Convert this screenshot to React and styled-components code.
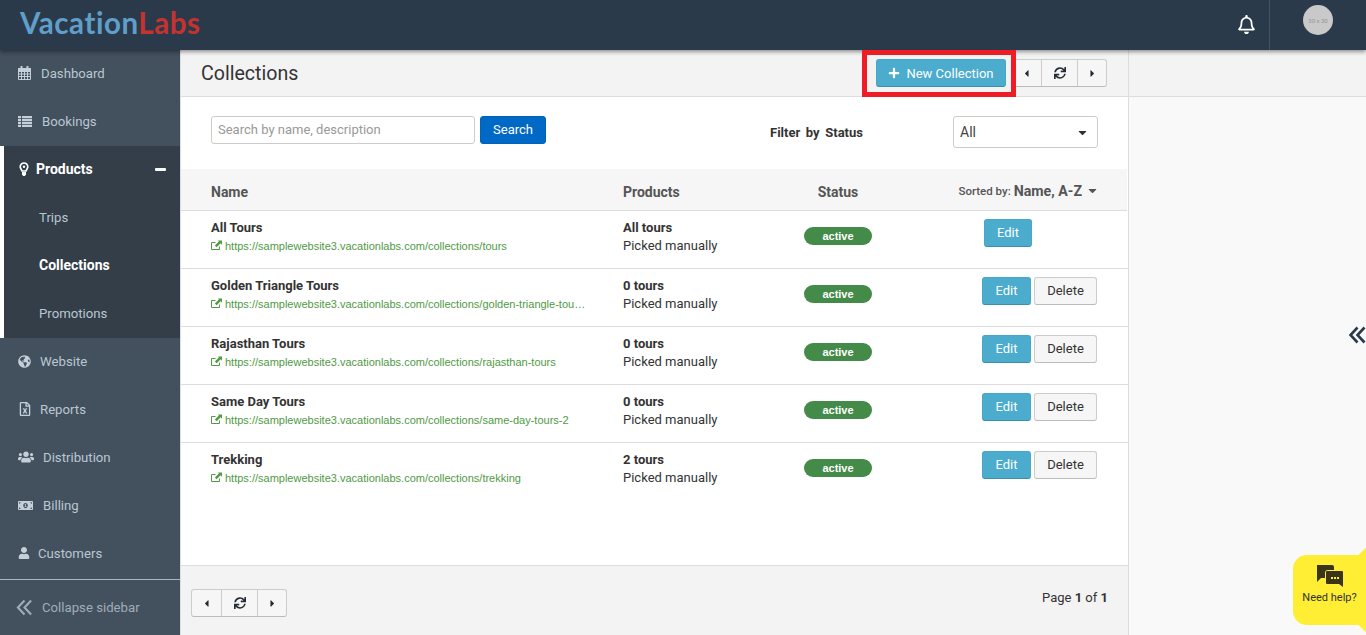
import React from "react";
import styled, { createGlobalStyle } from "styled-components";

// icons

import {
  FaCaretDown,
  FaCaretLeft,
  FaCaretRight,
  FaGlobeAmericas,
  FaMoneyBillAlt,
  FaPlus,
  FaRegBell,
  FaRegFileExcel,
  FaSync,
  FaUser,
  FaUsers,
} from "react-icons/fa";

const GlobalStyle = createGlobalStyle`
  html, body {
    margin: 0;
    height: 100%;
    overflow: hidden;
    font-family: Roboto, "Liberation Sans", Arial, sans-serif;
    color: #333;
    background: #fff;
  }
  * { box-sizing: border-box; }
`;

const Page = styled.div`
  position: relative;
  width: 1366px;
  height: 635px;
  display: flex;
  flex-direction: column;
  overflow: hidden;
`;

const TopBar = styled.header`
  position: relative;
  z-index: 2;
  height: 50px;
  flex: none;
  background: #2b3a4a;
  box-shadow: 0 2px 4px rgba(0, 0, 0, 0.4);
  display: flex;
  align-items: center;
`;

const Logo = styled.div`
  margin-left: 20px;
  padding-bottom: 5px;
  font-family: Lato, "Open Sans", sans-serif;
  font-size: 29.5px;
  font-weight: 700;
  letter-spacing: 0.55px;
  color: #5f9fc9;

  span {
    color: #c5322f;
  }
`;

const BellBox = styled.div`
  margin-left: auto;
  width: 46px;
  height: 50px;
  color: #fff;
  font-size: 19px;
  display: flex;
  align-items: center;
  justify-content: center;
  padding: 0 0 2px 1px;
`;

const UserBox = styled.div`
  width: 97px;
  height: 50px;
  border-left: 1px solid #46535f;
  padding: 5px 0 0 33px;
`;

const Avatar = styled.div`
  width: 30px;
  height: 30px;
  border-radius: 50%;
  background: #c9c9c9;
  color: #969696;
  font-size: 6px;
  display: flex;
  align-items: center;
  justify-content: center;
`;

const Body = styled.div`
  flex: 1;
  display: flex;
  min-height: 0;
`;

const Sidebar = styled.nav`
  width: 180px;
  flex: none;
  background: #43515e;
  display: flex;
  flex-direction: column;
`;

const NavItem = styled.div`
  height: 48px;
  flex: none;
  display: flex;
  align-items: center;
  padding: 0 0 2px 18px;
  font-size: 13.2px;
  color: #b9c7d1;
`;

const NavIcon = styled.span`
  width: ${(props) => props.$width}px;
  flex: none;
  display: flex;
  align-items: center;
  font-size: ${(props) => props.$size || 14}px;
  color: #c3d0da;
`;

const ActiveGroup = styled.div`
  background: #333e48;
  border-left: 4px solid #fff;
`;

const ActiveHead = styled.div`
  height: 48px;
  display: flex;
  align-items: center;
  padding: 0 14px 2px 15px;
  font-size: 14px;
  font-weight: 700;
  color: #fff;
`;

const ActiveIcon = styled.span`
  width: 17px;
  display: flex;
  align-items: center;
`;

const Minus = styled.span`
  margin-left: auto;
  width: 11px;
  height: 3px;
  border-radius: 1px;
  background: #fff;
`;

const SubItem = styled.div`
  height: 48px;
  display: flex;
  align-items: center;
  padding: 0 0 2px 35px;
  font-size: ${(props) => (props.$active ? 14 : 13.2)}px;
  font-weight: ${(props) => (props.$active ? 700 : 400)};
  color: ${(props) => (props.$active ? "#fff" : "#b9c7d1")};
`;

const Collapse = styled.div`
  margin-top: auto;
  height: 56px;
  border-top: 1px solid #a9b4bd;
  display: flex;
  align-items: center;
  gap: 9px;
  padding: 0 0 0 16px;
  font-size: 13.2px;
  color: #9fadb8;
`;

const Main = styled.main`
  width: 949px;
  flex: none;
  background: #fff;
  border-left: 1px solid #ddd;
  border-right: 1px solid #ddd;
  display: flex;
  flex-direction: column;
`;

const TitleBar = styled.div`
  height: 47px;
  flex: none;
  background: #f3f3f3;
  border-bottom: 1px solid #ddd;
  display: flex;
  align-items: center;
  padding: 0 21px 0 20px;
`;

const Title = styled.h1`
  margin: 0;
  font-size: 19.6px;
  font-weight: 400;
  color: #333;
`;

const NewButton = styled.button`
  margin-left: auto;
  margin-right: 5px;
  width: 130px;
  height: 28px;
  border: 1px solid #46a8c9;
  border-bottom-color: #3b8fac;
  border-radius: 3px;
  background: #4bacce;
  color: #fff;
  font-family: inherit;
  font-size: 13px;
  display: flex;
  align-items: center;
  justify-content: center;
  gap: 6px;
  padding: 0;

  svg {
    font-size: 12px;
  }
`;

const Pager = styled.div`
  height: 28px;
  display: flex;
  background: #f6f6f6;
  border: 1px solid #ccc;
  border-bottom-color: #bbb;
  border-radius: 3px;
  color: #222c36;
`;

const PagerCell = styled.div`
  width: ${(props) => props.$width}px;
  display: flex;
  align-items: center;
  justify-content: center;
  font-size: ${(props) => props.$size}px;

  & + & {
    border-left: 1px solid #ccc;
  }
`;

const FilterRow = styled.div`
  height: 72px;
  flex: none;
  display: flex;
  align-items: flex-start;
  padding: 19px 30px 0 30px;
`;

const SearchInput = styled.div`
  width: 264px;
  height: 28px;
  border: 1px solid #ccc;
  border-radius: 3px;
  padding: 0 0 2px 6px;
  display: flex;
  align-items: center;
  font-size: 13px;
  color: #999;
`;

const SearchButton = styled.button`
  margin-left: 5px;
  width: 66px;
  height: 28px;
  border: 1px solid #0063ba;
  border-radius: 3px;
  background: #0069c6;
  color: #fff;
  font-family: inherit;
  font-size: 13px;
  padding: 0 0 2px;
`;

const FilterLabel = styled.div`
  margin-left: 224px;
  height: 32px;
  display: flex;
  align-items: center;
  font-size: 13px;
  font-weight: 700;
  color: #333;
  word-spacing: 2.4px;
`;

const SelectBox = styled.div`
  margin-left: auto;
  width: 145px;
  height: 32px;
  border: 1px solid #ccc;
  border-radius: 3px;
  padding: 0 8px 0 6px;
  display: flex;
  align-items: center;
  justify-content: space-between;
  font-size: 14px;
  color: #444;

  svg {
    font-size: 13px;
    color: #333;
  }
`;

const TableHead = styled.div`
  height: 42px;
  flex: none;
  background: #f6f6f6;
  border-bottom: 1px solid #ddd;
  margin-right: 1px;
  display: grid;
  grid-template-columns: 412px 181px 1fr;
  align-items: center;
  padding: 4px 28px 0 30px;
  font-size: 14px;
  font-weight: 700;
  color: #555;
`;

const StatusHead = styled.div`
  width: 68px;
  white-space: nowrap;
  display: flex;
  justify-content: center;
`;

const HeadEnd = styled.div`
  display: flex;
  justify-content: space-between;
  align-items: center;
`;

const SortedBy = styled.div`
  display: flex;
  align-items: center;
  font-size: 11.5px;
  font-weight: 500;
  gap: 3px;
  margin-top: -2px;

  b {
    font-size: 14.2px;
  }

  svg {
    font-size: 13px;
    margin-left: 1px;
  }
`;

const Row = styled.div`
  height: 58px;
  flex: none;
  border-bottom: 1px solid ${(props) => (props.$last ? "transparent" : "#ddd")};
  display: grid;
  grid-template-columns: 412px 181px 178px 1fr;
  padding: 8px 30px 0 30px;
`;

const RowTitle = styled.div`
  font-size: 13px;
  line-height: 18px;
  font-weight: 700;
  color: #333;
`;

const RowSub = styled.div`
  font-size: 13px;
  line-height: 18px;
  color: #333;
`;

const UrlLine = styled.div`
  height: 18px;
  font-family: "Liberation Sans", Arial, sans-serif;
  font-size: 11px;
  line-height: 18px;
  color: #4f9a45;
  white-space: nowrap;

  svg {
    margin-right: 3px;
    vertical-align: -1px;
  }
`;

const Badge = styled.span`
  display: flex;
  align-items: center;
  justify-content: center;
  width: 68px;
  height: 18px;
  border-radius: 9px;
  background: #448a48;
  color: #fff;
  font-family: "Liberation Sans", Arial, sans-serif;
  font-size: 11px;
  font-weight: 700;
  margin-top: 8px;
`;

const Actions = styled.div`
  display: flex;
  gap: 3px;
  padding-left: ${(props) => (props.$solo ? 2 : 0)}px;
  align-items: flex-start;
`;

const EditButton = styled.button`
  width: ${(props) => (props.$solo ? 48 : 49)}px;
  height: 28px;
  border: 1px solid #46a8c9;
  border-bottom-color: #3b8fac;
  border-radius: 3px;
  background: #4bacce;
  color: #fff;
  font-family: inherit;
  font-size: 13px;
  padding: 0 0 2px;
`;

const DeleteButton = styled.button`
  width: 63px;
  height: 28px;
  border: 1px solid #ccc;
  border-bottom-color: #bbb;
  border-radius: 3px;
  background: #f6f6f6;
  color: #333;
  font-family: inherit;
  font-size: 13px;
  padding: 0 0 1px;
`;

const Footer = styled.div`
  margin-top: auto;
  height: 70px;
  flex: none;
  background: #f3f3f3;
  border-top: 1px solid #ddd;
  display: flex;
  justify-content: space-between;
  padding: 23px 20px 0 10px;
`;

const PageCount = styled.div`
  font-size: 13px;
  color: #333;
  line-height: 18px;
`;

const RightPanel = styled.aside`
  flex: 1;
  background: #f9f9f9;
  display: flex;
  flex-direction: column;
`;

const RightTop = styled.div`
  height: 47px;
  flex: none;
  background: #f3f3f3;
  border-bottom: 1px solid #ddd;
`;

const ExpandIcon = styled.div`
  margin-top: 229px;
  align-self: flex-end;
  height: 18px;
  display: flex;
`;

const Annotation = styled.div`
  position: absolute;
  z-index: 3;
  left: 862px;
  top: 50px;
  width: 154px;
  height: 47px;
  border: 5px solid #ee1c25;
  pointer-events: none;
`;

const HelpBubble = styled.div`
  position: absolute;
  z-index: 3;
  left: 1293px;
  top: 555px;
  width: 73px;
  height: 70px;
  background: #ffee33;
  border-radius: 14px 0 0 14px;
  padding-top: 9px;
  font-size: 11px;
  color: #333;

  &::after {
    content: "";
    position: absolute;
    left: 43px;
    top: 5px;
    width: 60px;
    height: 60px;
    background: #ffee33;
    transform: rotate(45deg);
  }
`;

const HelpContent = styled.div`
  position: relative;
  z-index: 1;
  display: flex;
  flex-direction: column;
  align-items: center;
  gap: 3px;
`;

const CalendarIcon = () => (
  <svg width="13" height="14" viewBox="0 0 13 14">
    <path
      d="M0.5 2.5h12v11h-12zM0.5 5.5h12M0.5 8h12M0.5 10.5h12M3.5 5.5v8M6.5 5.5v8M9.5 5.5v8"
      fill="none"
      stroke="currentColor"
    />
    <path d="M0 2h13v3H0zM2.5 0h2v3h-2zM8.5 0h2v3h-2z" fill="currentColor" />
  </svg>
);

const ListIcon = () => (
  <svg width="14" height="11" viewBox="0 0 14 11">
    <path
      d="M0 0h3v2.2H0zM4 0h10v2.2H4zM0 3h3v2.2H0zM4 3h10v2.2H4zM0 5.9h3v2.2H0zM4 5.9h10v2.2H4zM0 8.8h3V11H0zM4 8.8h10V11H4z"
      fill="currentColor"
    />
  </svg>
);

const BulbIcon = () => (
  <svg width="10" height="14" viewBox="0 0 10 14">
    <path
      d="M5 1a3.8 3.8 0 0 1 3.8 3.8c0 1.6-1.3 2.6-1.8 4.2H3c-.5-1.6-1.8-2.6-1.8-4.2A3.8 3.8 0 0 1 5 1z"
      fill="none"
      stroke="#fff"
      strokeWidth="1.6"
    />
    <circle cx="5" cy="4.8" r="1.2" fill="#fff" />
    <path d="M3 10h4v2.4L5.8 14H4.2L3 12.4z" fill="#fff" />
  </svg>
);

const ExternalIcon = () => (
  <svg width="11" height="11" viewBox="0 0 11 11">
    <path d="M8.5 6.5v3h-8v-7h4" fill="none" stroke="currentColor" />
    <path d="M6.8 0.5H11v4.2L9.6 3.3 5.6 7.3 3.9 5.6l4-4z" fill="currentColor" />
  </svg>
);

// drawn, the package's angle icons have heavier strokes than the picture
const DoubleAngle = ({ width, height, stroke, color }) => (
  <svg width={width} height={height} viewBox="0 0 17 18">
    <path
      d="M8.5 1.5 1.5 9l7 7.5M15.5 1.5 8.5 9l7 7.5"
      fill="none"
      stroke={color}
      strokeWidth={stroke}
    />
  </svg>
);

const nav1 = [
  { label: "Dashboard", icon: <CalendarIcon />, width: 23 },
  { label: "Bookings", icon: <ListIcon />, width: 24 },
];

const nav2 = [
  { label: "Website", icon: <FaGlobeAmericas />, width: 22, size: 13 },
  { label: "Reports", icon: <FaRegFileExcel />, width: 22, size: 14 },
  { label: "Distribution", icon: <FaUsers />, width: 25, size: 16 },
  { label: "Billing", icon: <FaMoneyBillAlt />, width: 25, size: 15 },
  { label: "Customers", icon: <FaUser />, width: 20, size: 12 },
];

const base = "https://samplewebsite3.vacationlabs.com/collections/";

const rows = [
  { name: "All Tours", slug: "tours", count: "All tours", solo: true },
  { name: "Golden Triangle Tours", slug: "golden-triangle-tou…", count: "0 tours" },
  { name: "Rajasthan Tours", slug: "rajasthan-tours", count: "0 tours" },
  { name: "Same Day Tours", slug: "same-day-tours-2", count: "0 tours" },
  { name: "Trekking", slug: "trekking", count: "2 tours", last: true },
];

const PagerGroup = () => (
  <Pager>
    <PagerCell $width={29} $size={11}>
      <FaCaretLeft />
    </PagerCell>
    <PagerCell $width={36} $size={12}>
      <FaSync />
    </PagerCell>
    <PagerCell $width={29} $size={11}>
      <FaCaretRight />
    </PagerCell>
  </Pager>
);

const App = () => {
  return (
    <Page>
      <GlobalStyle />
      <TopBar>
        <Logo>
          Vacation<span>Labs</span>
        </Logo>
        <BellBox>
          <FaRegBell />
        </BellBox>
        <UserBox>
          <Avatar>30 x 30</Avatar>
        </UserBox>
      </TopBar>
      <Body>
        <Sidebar>
          {nav1.map((item) => (
            <NavItem key={item.label}>
              <NavIcon $width={item.width}>{item.icon}</NavIcon>
              {item.label}
            </NavItem>
          ))}
          <ActiveGroup>
            <ActiveHead>
              <ActiveIcon>
                <BulbIcon />
              </ActiveIcon>
              Products
              <Minus />
            </ActiveHead>
            <SubItem>Trips</SubItem>
            <SubItem $active>Collections</SubItem>
            <SubItem>Promotions</SubItem>
          </ActiveGroup>
          {nav2.map((item) => (
            <NavItem key={item.label}>
              <NavIcon $width={item.width} $size={item.size}>
                {item.icon}
              </NavIcon>
              {item.label}
            </NavItem>
          ))}
          <Collapse>
            <DoubleAngle width={17} height={17} stroke={2.2} color="#9fadb8" />
            Collapse sidebar
          </Collapse>
        </Sidebar>
        <Main>
          <TitleBar>
            <Title>Collections</Title>
            <NewButton>
              <FaPlus />
              New Collection
            </NewButton>
            <PagerGroup />
          </TitleBar>
          <FilterRow>
            <SearchInput>Search by name, description</SearchInput>
            <SearchButton>Search</SearchButton>
            <FilterLabel>Filter by Status</FilterLabel>
            <SelectBox>
              All
              <FaCaretDown />
            </SelectBox>
          </FilterRow>
          <TableHead>
            <div>Name</div>
            <div>Products</div>
            <HeadEnd>
              <StatusHead>Status</StatusHead>
              <SortedBy>
                Sorted by: <b>Name, A-Z</b>
                <FaCaretDown />
              </SortedBy>
            </HeadEnd>
          </TableHead>
          {rows.map((row) => (
            <Row key={row.name} $last={row.last}>
              <div>
                <RowTitle>{row.name}</RowTitle>
                <UrlLine>
                  <ExternalIcon />
                  {base + row.slug}
                </UrlLine>
              </div>
              <div>
                <RowTitle>{row.count}</RowTitle>
                <RowSub>Picked manually</RowSub>
              </div>
              <div>
                <Badge>active</Badge>
              </div>
              <Actions $solo={row.solo}>
                <EditButton $solo={row.solo}>Edit</EditButton>
                {!row.solo && <DeleteButton>Delete</DeleteButton>}
              </Actions>
            </Row>
          ))}
          <Footer>
            <PagerGroup />
            <PageCount>
              Page <b>1</b> of <b>1</b>
            </PageCount>
          </Footer>
        </Main>
        <RightPanel>
          <RightTop />
          <ExpandIcon>
            <DoubleAngle width={17} height={18} stroke={2.6} color="#2b3a4a" />
          </ExpandIcon>
        </RightPanel>
      </Body>
      <Annotation />
      <HelpBubble>
        <HelpContent>
          <svg width="28" height="24" viewBox="0 0 28 24">
            <path d="M1 1h15a2 2 0 0 1 2 2v3h-6a3 3 0 0 0-3 3v5H5l-4 4z" fill="#3a3518" />
            <path d="M11 7h15a1 1 0 0 1 1 1v15l-4-3H11a1 1 0 0 1-1-1V8a1 1 0 0 1 1-1z" fill="#3a3518" />
            <path d="M15 13h2v2h-2zM18 13h2v2h-2zM21 13h2v2h-2z" fill="#ffee33" />
          </svg>
          Need help?
        </HelpContent>
      </HelpBubble>
    </Page>
  );
};

export default App;
